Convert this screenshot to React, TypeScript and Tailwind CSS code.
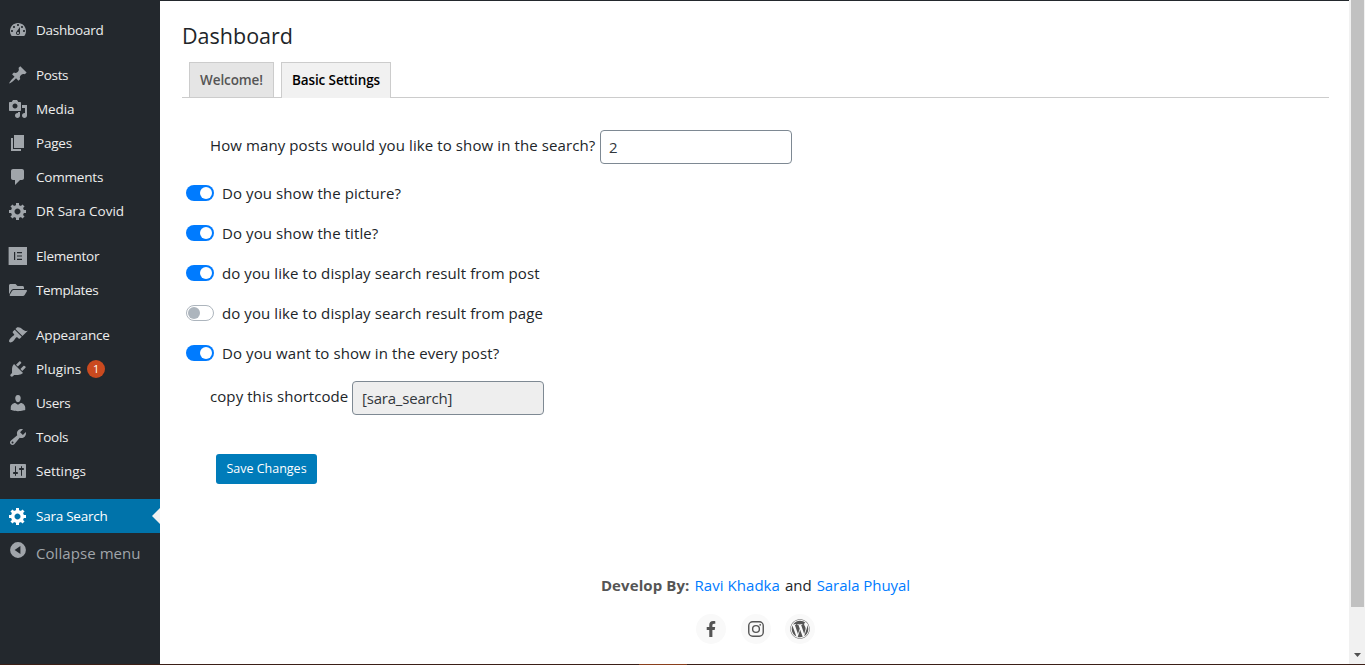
import React from "react";
import { FaFacebookF, FaFolderOpen, FaWordpress } from "react-icons/fa";

const paths = {
  dashboard:
    "M3.76 16h12.48c1.1-1.37 1.76-3.11 1.76-5 0-4.42-3.58-8-8-8s-8 3.58-8 8c0 1.89.66 3.63 1.76 5zM10 4c.55 0 1 .45 1 1s-.45 1-1 1-1-.45-1-1 .45-1 1-1zM6 6c.55 0 1 .45 1 1s-.45 1-1 1-1-.45-1-1 .45-1 1-1zm8 0c.55 0 1 .45 1 1s-.45 1-1 1-1-.45-1-1 .45-1 1-1zm-5.37 5.55L12 7v6c0 1.1-.9 2-2 2s-2-.9-2-2c0-.57.24-1.08.63-1.45zM4 10c.55 0 1 .45 1 1s-.45 1-1 1-1-.45-1-1 .45-1 1-1zm12 0c.55 0 1 .45 1 1s-.45 1-1 1-1-.45-1-1 .45-1 1-1zm-5 3c0-.55-.45-1-1-1s-1 .45-1 1 .45 1 1 1 1-.45 1-1z",
  posts:
    "M10.44 3.02l1.82-1.82 6.36 6.35-1.83 1.82c-1.05-.68-2.48-.57-3.41.36l-.75.75c-.92.93-1.04 2.35-.35 3.41l-1.83 1.82-2.41-2.41-2.8 2.79c-.42.42-3.38 2.71-3.8 2.29s1.86-3.39 2.28-3.81l2.79-2.79L4.1 9.36l1.83-1.82c1.05.69 2.48.57 3.4-.36l.75-.75c.93-.92 1.05-2.35.36-3.41z",
  media:
    "M13 11V4c0-.55-.45-1-1-1h-1.67L9 1H5L3.67 3H2c-.55 0-1 .45-1 1v7c0 .55.45 1 1 1h10c.55 0 1-.45 1-1zM7 4.5c1.38 0 2.5 1.12 2.5 2.5S8.38 9.5 7 9.5 4.5 8.38 4.5 7 5.62 4.5 7 4.5zM14 6h5v10.5c0 1.38-1.12 2.5-2.5 2.5S14 17.88 14 16.5s1.12-2.5 2.5-2.5c.17 0 .34.02.5.05V9h-3V6zm-4 8.05V13h2v3.5c0 1.38-1.12 2.5-2.5 2.5S7 17.88 7 16.5 8.12 14 9.5 14c.17 0 .34.02.5.05z",
  pages: "M6 15V2h10v13H6zm-1 1h8v2H3V5h2v11z",
  comments:
    "M5 2h9c1.1 0 2 .9 2 2v7c0 1.1-.9 2-2 2h-2l-5 5v-5H5c-1.1 0-2-.9-2-2V4c0-1.1.9-2 2-2z",
  generic:
    "M18 12h-2.18c-.17.7-.44 1.35-.81 1.93l1.54 1.54-2.1 2.1-1.54-1.54c-.58.36-1.23.63-1.91.79V19H8v-2.18c-.68-.16-1.33-.43-1.91-.79l-1.54 1.54-2.12-2.12 1.54-1.54c-.36-.58-.63-1.23-.79-1.91H1V9.03h2.17c.16-.7.44-1.35.8-1.94L2.43 5.55l2.1-2.1 1.54 1.54c.58-.37 1.24-.64 1.93-.81V2h3v2.18c.68.16 1.33.43 1.91.79l1.54-1.54 2.12 2.12-1.54 1.54c.36.59.64 1.24.8 1.94H18V12zm-8.5 1.5c1.66 0 3-1.34 3-3s-1.34-3-3-3-3 1.34-3 3 1.34 3 3 3z",
  elementor: "M.6 1h18.4v18H.6zM6 6v8h1.2V6zM9 6v1.2h5V6zM9 9.4v1.2h5V9.4zM9 12.8V14h5v-1.2z",
  appearance:
    "M14.48 11.06L7.41 3.99l1.5-1.5c.5-.56 2.3-.47 3.51.32 1.21.8 1.43 1.28 2.91 2.1 1.18.64 2.45 1.26 4.45.85zm-.71.71L6.7 4.7 4.93 6.47c-.39.39-.39 1.02 0 1.41l1.06 1.06c.39.39.39 1.03 0 1.42-.6.6-1.43 1.11-2.21 1.69-.35.26-.7.53-1.01.84C1.43 14.23.4 16.08 1.4 17.07c.99 1 2.84-.03 4.18-1.36.31-.31.58-.66.85-1.02.57-.78 1.08-1.61 1.69-2.21.39-.39 1.02-.39 1.41 0l1.06 1.06c.39.39 1.02.39 1.41 0z",
  plugins:
    "M13.11 4.36L9.87 7.6 8 5.73l3.24-3.24c.35-.34 1.05-.2 1.56.32.52.51.66 1.21.31 1.55zm-8 1.77l.91-1.12 9.01 9.01-1.19.84c-.71.71-2.63 1.16-3.82 1.16H6.14L4.9 17.26c-.59.59-1.54.59-2.12 0-.59-.58-.59-1.53 0-2.12l1.24-1.24v-3.88c0-1.13.4-3.19 1.09-3.89zm7.26 3.97l3.24-3.24c.34-.35 1.04-.21 1.55.31.52.51.66 1.21.31 1.55l-3.24 3.25z",
  users:
    "M10 9.25c-2.27 0-2.73-3.44-2.73-3.44C7 4.02 7.82 2 9.97 2c2.16 0 2.98 2.02 2.71 3.81 0 0-.41 3.44-2.68 3.44zm0 2.57L12.72 10c2.39 0 4.52 2.33 4.52 4.53v2.49s-3.65 1.13-7.24 1.13c-3.65 0-7.24-1.13-7.24-1.13v-2.49c0-2.25 1.94-4.48 4.47-4.48z",
  tools:
    "M16.68 9.77c-1.34 1.34-3.3 1.67-4.95.99l-5.41 6.52c-.99.99-2.59.99-3.58 0s-.99-2.59 0-3.57l6.52-5.42c-.68-1.65-.35-3.61.99-4.95 1.28-1.28 3.12-1.62 4.72-1.06l-2.89 2.89 2.82 2.82 2.86-2.87c.53 1.58.18 3.39-1.08 4.65zM3.81 16.21c.4.39 1.04.39 1.43 0 .4-.4.4-1.04 0-1.43-.39-.4-1.03-.4-1.43 0-.39.39-.39 1.03 0 1.43z",
  settings:
    "M18 16V4c0-.55-.45-1-1-1H3c-.55 0-1 .45-1 1v12c0 .55.45 1 1 1h14c.55 0 1-.45 1-1zM8 11h1c.55 0 1 .45 1 1s-.45 1-1 1H8v1.5c0 .28-.22.5-.5.5s-.5-.22-.5-.5V13H6c-.55 0-1-.45-1-1s.45-1 1-1h1V5.5c0-.28.22-.5.5-.5s.5.22.5.5V11zm5-2h-1c-.55 0-1-.45-1-1s.45-1 1-1h1V5.5c0-.28.22-.5.5-.5s.5.22.5.5V7h1c.55 0 1 .45 1 1s-.45 1-1 1h-1v5.5c0 .28-.22.5-.5.5s-.5-.22-.5-.5V9z",
  collapse: "M10 2.1a7.9 7.9 0 1 0 0 15.8a7.9 7.9 0 0 0 0-15.8zM12.4 6v8L6.6 10z",
};

type IconName = keyof typeof paths;

function Icon({ name }: { name: IconName }) {
  return (
    <svg viewBox="0 0 20 20" className="size-5" fill="currentColor" fillRule="evenodd">
      <path d={paths[name]} />
    </svg>
  );
}

type Item = { label: string; icon: IconName | "folder"; spacing: string; badge?: string };

const groups: Item[][] = [
  [{ label: "Dashboard", icon: "dashboard", spacing: "tracking-[-0.25px]" }],
  [
    { label: "Posts", icon: "posts", spacing: "tracking-[-0.35px]" },
    { label: "Media", icon: "media", spacing: "tracking-[-0.1px]" },
    { label: "Pages", icon: "pages", spacing: "tracking-[-0.2px]" },
    { label: "Comments", icon: "comments", spacing: "tracking-[-0.2px]" },
    { label: "DR Sara Covid", icon: "generic", spacing: "tracking-normal" },
  ],
  [
    { label: "Elementor", icon: "elementor", spacing: "tracking-[-0.22px]" },
    { label: "Templates", icon: "folder", spacing: "tracking-[-0.35px]" },
  ],
  [
    { label: "Appearance", icon: "appearance", spacing: "tracking-[-0.18px]" },
    { label: "Plugins", icon: "plugins", spacing: "tracking-normal", badge: "1" },
    { label: "Users", icon: "users", spacing: "tracking-[-0.25px]" },
    { label: "Tools", icon: "tools", spacing: "tracking-[-0.25px]" },
    { label: "Settings", icon: "settings", spacing: "tracking-normal" },
  ],
];

function Sidebar() {
  return (
    <nav className="flex w-40 shrink-0 flex-col bg-[#23282d] pt-[13px] text-[13.5px] font-medium text-[#eee]">
      <div className="flex flex-col gap-[11px]">
        {groups.map((group, i) => (
          <ul key={i}>
            {group.map((item) => (
              <li key={item.label} className="flex h-[34px] items-center">
                <span className="flex w-9 shrink-0 justify-center text-[#a0a5aa]">
                  {item.icon === "folder" ? <FaFolderOpen className="size-[18px]" /> : <Icon name={item.icon} />}
                </span>
                <span className={"whitespace-nowrap " + item.spacing}>{item.label}</span>
                {item.badge && (
                  <span className="ml-1.5 flex size-[18px] items-center justify-center rounded-full bg-[#ca4a1f] text-[11px] text-white">
                    {item.badge}
                  </span>
                )}
              </li>
            ))}
          </ul>
        ))}
        <div className="flex h-[34px] items-center bg-[#0073aa] text-white">
          <span className="flex w-9 shrink-0 justify-center">
            <Icon name="generic" />
          </span>
          <span className="grow whitespace-nowrap tracking-[-0.25px]">Sara Search</span>
          <svg viewBox="0 0 8 16" className="h-4 w-2" fill="#f1f1f1">
            <path d="M8 0v16L0 8z" />
          </svg>
        </div>
      </div>
      <button className="flex h-10 items-center text-[15px] font-normal text-[#a0a5aa]">
        <span className="flex w-9 shrink-0 -translate-y-[3px] justify-center">
          <Icon name="collapse" />
        </span>
        <span className="whitespace-nowrap tracking-[0.07px]">Collapse menu</span>
      </button>
    </nav>
  );
}

function Toggle({ on, label }: { on: boolean; label: string }) {
  return (
    <label className="flex h-10 items-center gap-2">
      <span
        className={
          on
            ? "flex h-4 w-7 items-center justify-end rounded-full bg-[#007bff] p-0.5"
            : "flex h-4 w-7 items-center rounded-full border border-[#adb5bd] bg-white p-px"
        }
      >
        <span className={on ? "size-3 rounded-full bg-white" : "size-3 rounded-full bg-[#adb5bd]"} />
      </span>
      <span className="whitespace-nowrap">{label}</span>
    </label>
  );
}

export default function App() {
  return (
    <div className="flex h-[665px] w-[1365px] flex-col overflow-hidden bg-white font-['Open_Sans','Noto_Sans',sans-serif] text-[15px] text-[#212529]">
      <div className="flex min-h-0 grow">
        <Sidebar />
        <main className="flex grow flex-col border-t border-[#23282d] pr-5 pl-[22px]">
          <h1 className="mt-[21px] text-[21.5px] leading-7">Dashboard</h1>
          <div className="mt-3 flex h-9 gap-[7px] border-b border-[#ccc] pl-[7px] text-[13.5px] font-semibold tracking-[-0.1px]">
            <div className="flex h-9 w-[85px] items-center justify-center border border-[#ccc] bg-[#e5e5e5] text-[#555]">
              Welcome!
            </div>
            <div className="flex h-9 w-[110px] items-center justify-center border border-b-0 border-[#ccc] bg-[#f1f1f1] text-black">
              Basic Settings
            </div>
          </div>
          <div className="mt-8 flex h-[34px] pl-7">
            <span className="w-[390px] whitespace-nowrap leading-[30px] tracking-[0.1px]">
              How many posts would you like to show in the search?
            </span>
            <div className="flex h-[34px] w-48 items-center rounded border border-[#7e8993] px-2 text-[#32373c]">2</div>
          </div>
          <div className="mt-[9px] pl-1 tracking-[0.09px]">
            <Toggle on label="Do you show the picture?" />
            <Toggle on label="Do you show the title?" />
            <Toggle on label="do you like to display search result from post" />
            <Toggle on={false} label="do you like to display search result from page" />
            <Toggle on label="Do you want to show in the every post?" />
          </div>
          <div className="mt-2 flex h-[34px] pl-7">
            <span className="w-[142px] whitespace-nowrap leading-[30px] tracking-[0.08px]">copy this shortcode</span>
            <div className="flex h-[34px] w-48 items-center rounded border border-[#7e8993] bg-[#eee] px-[9px] tracking-[-0.2px] text-[#32373c]">
              [sara_search]
            </div>
          </div>
          <button className="mt-[39px] ml-[34px] h-[30px] w-[101px] rounded-[3px] bg-[#007cba] pt-px text-[12.5px] font-medium whitespace-nowrap text-white">
            Save Changes
          </button>
          <footer className="mt-[89px] flex flex-col items-center">
            <p className="flex gap-[5px] whitespace-nowrap leading-6">
              <b className="font-bold tracking-[0.1px] text-[#555]">Develop By:</b>
              <a className="tracking-[0.05px] text-[#007bff]">Ravi Khadka</a>
              <span>and</span>
              <a className="tracking-[-0.05px] text-[#007bff]">Sarala Phuyal</a>
            </p>
            <div className="mt-[17px] flex gap-[14.5px] text-[#555]">
              <span className="flex size-[30px] items-center justify-center rounded-full bg-[#f9f9f9]">
                <FaFacebookF className="size-4" />
              </span>
              <span className="flex size-[30px] items-center justify-center rounded-full bg-[#f9f9f9]">
                <svg viewBox="0 0 16 16" className="size-4" fill="none" stroke="currentColor" strokeWidth="1.4">
                  <rect x="0.75" y="0.75" width="14.5" height="14.5" rx="4" />
                  <circle cx="8" cy="8" r="3.4" />
                  <circle cx="12.2" cy="3.8" r="0.9" fill="currentColor" stroke="none" />
                </svg>
              </span>
              <span className="flex size-[30px] items-center justify-center rounded-full bg-[#f9f9f9]">
                <FaWordpress className="size-5" />
              </span>
            </div>
          </footer>
        </main>
        <div className="flex w-4 shrink-0 flex-col items-center bg-[#f1f1f1]">
          <div className="ml-px h-[607px] w-[13px] bg-[#c1c1c1]" />
          <svg viewBox="0 0 7 4" className="mt-[46px] h-1 w-[7px]" fill="#505050">
            <path d="M0 0h7L3.5 4z" />
          </svg>
        </div>
      </div>
      <div className="flex h-px shrink-0 bg-[#3b1f17]">
        <div className="ml-[639px] w-12 bg-[#8a3f1c]" />
      </div>
    </div>
  );
}
